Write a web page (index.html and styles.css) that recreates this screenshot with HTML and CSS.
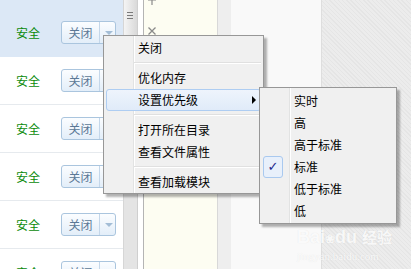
FILE: index.html
```html
<!DOCTYPE html>
<html>
<head>
    <title>进程管理</title>
    <link rel="stylesheet" href="styles.css">
</head>
<body>
    <div class="screen">
        <div class="list">
            <div class="row first selected">
                <span class="state">安全</span>
                <span class="btn"><span class="btn-label">关闭</span><span class="btn-drop"></span></span>
            </div>
            <div class="row">
                <span class="state">安全</span>
                <span class="btn"><span class="btn-label">关闭</span><span class="btn-drop"></span></span>
            </div>
            <div class="row">
                <span class="state">安全</span>
                <span class="btn"><span class="btn-label">关闭</span><span class="btn-drop"></span></span>
            </div>
            <div class="row">
                <span class="state">安全</span>
                <span class="btn"><span class="btn-label">关闭</span><span class="btn-drop"></span></span>
            </div>
            <div class="row">
                <span class="state">安全</span>
                <span class="btn"><span class="btn-label">关闭</span><span class="btn-drop"></span></span>
            </div>
            <div class="row">
                <span class="state">安全</span>
                <span class="btn"><span class="btn-label">关闭</span><span class="btn-drop"></span></span>
            </div>
        </div>

        <div class="scrollbar">
            <div class="thumb"><span class="grip"></span></div>
        </div>

        <div class="detail">
            <svg class="tool plus" width="8" height="8" viewBox="0 0 8 8">
                <path d="M4 0V7M0 2H8" stroke="#8a8a8a" stroke-width="1.2" fill="none"/>
            </svg>
            <svg class="tool cross" width="8" height="8" viewBox="0 0 8 8">
                <path d="M0.5 0.5L7.5 7.5M7.5 0.5L0.5 7.5" stroke="#8a8a8a" stroke-width="1.3" fill="none"/>
            </svg>
        </div>
        <div class="gap"></div>
        <div class="pane"></div>
        <div class="texture"></div>
    </div>

    <!-- context menu -->
    <div class="menu main-menu">
        <div class="item">关闭</div>
        <div class="sep"></div>
        <div class="item">优化内存</div>
        <div class="item active">设置优先级<span class="arrow"></span></div>
        <div class="sep"></div>
        <div class="item">打开所在目录</div>
        <div class="item">查看文件属性</div>
        <div class="sep"></div>
        <div class="item">查看加载模块</div>
    </div>

    <div class="menu sub-menu">
        <div class="item">实时</div>
        <div class="item">高</div>
        <div class="item">高于标准</div>
        <div class="item checked"><span class="check">✓</span>标准</div>
        <div class="item">低于标准</div>
        <div class="item">低</div>
    </div>

    <div class="watermark">
        <div class="wm-logo">Bai<span class="paw">❀</span>du <span class="wm-cn">经验</span></div>
        <div class="wm-url">jingyan.baidu.com</div>
    </div>
</body>
</html>
```

FILE: styles.css
```css
body {
    margin: 0;
    width: 411px;
    height: 269px;
    overflow: hidden;
    font-family: "Noto Sans CJK SC", "DejaVu Sans", sans-serif;
    font-size: 12px;
    position: relative;
}
.screen {
    display: flex;
    height: 269px;
}

/* process list */
.list {
    width: 123px;
    background: #fff;
    flex-shrink: 0;
}
.row {
    display: flex;
    align-items: center;
    height: 48px;
    box-sizing: border-box;
    border-bottom: 1px solid #e6eaee;
}
.row.first {
    height: 57px;
    padding-top: 9px;
}
.selected {
    background: #dce8f6;
    border-bottom-color: #dce8f6;
}
.state {
    color: #0a8a0a;
    width: 45px;
    padding-left: 16px;
    line-height: 14px;
}
.btn {
    display: flex;
    width: 55px;
    height: 23px;
    box-sizing: border-box;
    border: 1px solid #aac5de;
    border-radius: 3px;
    background: linear-gradient(#fbfdff, #e3eef9);
}
.btn-label {
    width: 37px;
    text-align: center;
    line-height: 21px;
    color: #5b7896;
    border-right: 1px solid #c4d7ea;
}
.btn-drop {
    flex: 1;
    position: relative;
}
.btn-drop::after {
    content: "";
    position: absolute;
    left: 5px;
    top: 9px;
    border-left: 4px solid transparent;
    border-right: 4px solid transparent;
    border-top: 4px solid #a3bdd6;
}

/* scrollbar */
.scrollbar {
    width: 13px;
    background: #e4e4e4;
    border-left: 1px solid #d6d6d6;
    border-right: 1px solid #cfcfcf;
    flex-shrink: 0;
}
.thumb {
    height: 35px;
    background: linear-gradient(to right, #f4f4f4, #d9d9d9);
    border-bottom: 1px solid #b9b9b9;
    position: relative;
}
.grip {
    position: absolute;
    left: 3px;
    top: 12px;
    width: 6px;
    height: 7px;
    background: repeating-linear-gradient(#7a7a7a 0, #7a7a7a 1px, transparent 1px, transparent 3px);
}

/* side panels */
.detail {
    width: 73px;
    margin-left: 5px;
    background: #fdfdf2;
    border-left: 1px solid #b4b4b4;
    border-right: 1px solid #d8d8d8;
    flex-shrink: 0;
    position: relative;
}
.tool {
    position: absolute;
    left: 4px;
}
.plus {
    top: -2px;
}
.cross {
    top: 27px;
}
.gap {
    width: 13px;
    background: #eeeeee;
    flex-shrink: 0;
}
.pane {
    width: 90px;
    background: #f9f9f9;
    border-right: 1px solid #dedede;
    flex-shrink: 0;
}
.texture {
    flex: 1;
    background: repeating-linear-gradient(45deg, #e5e5e5 0, #e5e5e5 1px, #ececec 1px, #ececec 3px);
}

/* menus */
.menu {
    position: absolute;
    box-sizing: border-box;
    border: 1px solid #979797;
    padding: 1px 2px 2px;
    background: linear-gradient(to right, #f0f0f0 29px, #e2e3e3 29px, #e2e3e3 30px, #ffffff 30px, #ffffff 31px, #f0f0f0 31px);
    box-shadow: 3px 3px 2px rgba(0, 0, 0, 0.3);
    color: #000;
}
.main-menu {
    left: 103px;
    top: 35px;
    width: 161px;
    height: 159px;
}
.sub-menu {
    left: 259px;
    top: 87px;
    width: 138px;
    height: 137px;
    padding-top: 2px;
}
.item {
    height: 22px;
    line-height: 22px;
    padding-left: 32px;
    position: relative;
    box-sizing: border-box;
}
.item.active {
    border: 1px solid #aecdf2;
    border-radius: 3px;
    line-height: 20px;
    padding-left: 31px;
    background: linear-gradient(#eef4fc, #e0ebf9);
}
.arrow {
    position: absolute;
    right: 4px;
    top: 6px;
    border-top: 4px solid transparent;
    border-bottom: 4px solid transparent;
    border-left: 4px solid #000;
}
.sep {
    height: 8px;
    margin-left: 28px;
    background: linear-gradient(transparent 3px, #e0e0e0 3px, #e0e0e0 4px, #ffffff 4px, #ffffff 5px, transparent 5px);
}
.check {
    position: absolute;
    left: 1px;
    top: 0;
    width: 20px;
    height: 22px;
    box-sizing: border-box;
    border: 1px solid #a9c9ef;
    border-radius: 3px;
    background: #e8f0fb;
    color: #1c2a8c;
    text-align: center;
    line-height: 20px;
    font-family: "DejaVu Sans", sans-serif;
    font-size: 13px;
    font-weight: bold;
}

/* watermark */
.watermark {
    position: absolute;
    left: 297px;
    top: 226px;
    color: rgba(255, 255, 255, 0.85);
    text-shadow: 0 0 1px rgba(0, 0, 0, 0.1);
}
.wm-logo {
    font-family: "Liberation Sans", sans-serif;
    font-size: 18px;
    font-weight: bold;
    line-height: 22px;
}
.paw {
    font-size: 12px;
}
.wm-cn {
    font-family: "Noto Sans CJK SC", sans-serif;
    font-size: 15px;
}
.wm-url {
    font-family: "Liberation Serif", serif;
    font-size: 11px;
    line-height: 12px;
}
```
